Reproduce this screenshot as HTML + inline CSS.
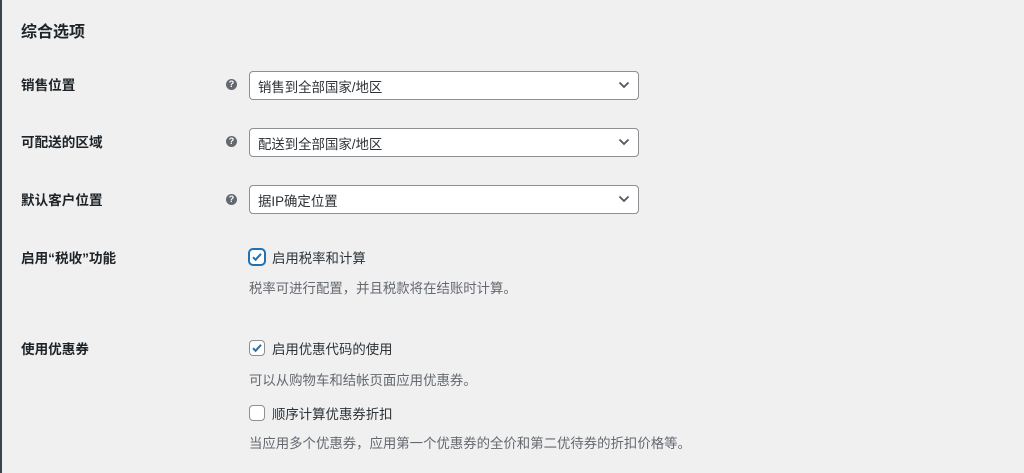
<!DOCTYPE html>
<html><head><meta charset="utf-8"><style>
body{margin:0;width:1024px;height:473px;background:#f0f0f1;position:relative;overflow:hidden;font-family:"Liberation Sans","Noto Sans CJK SC",sans-serif;color:#1d2327}
.edge{position:absolute;left:0;top:0;width:2px;height:473px;background:#3c434a}
.a{position:absolute;white-space:nowrap}
h2{position:absolute;left:21px;top:18px;margin:0;font-size:16px;font-weight:700;color:#1d2327}
.lbl{font-size:13.6px;font-weight:700;color:#1d2327}
.help{position:absolute;left:226px;width:11px;height:11px;border-radius:50%;background:#646970;color:#fff;font-size:9px;font-weight:700;text-align:center;line-height:11px}
.sel{position:absolute;left:249px;width:388px;height:27px;background:#fff;border:1px solid #8c8f94;border-radius:4px;box-sizing:content-box;font-size:13.4px;color:#2c3338}
.sel span{position:absolute;left:8px;top:4px}
.sel svg{position:absolute;right:8px;top:9px}
.cb{position:absolute;left:249px;width:14px;height:14px;border:1px solid #8c8f94;border-radius:4px;background:#fff}
.cb svg{position:absolute;left:0;top:0}
.t{font-size:13.4px;color:#2c3338}
.d{font-size:13.4px;color:#646970}
</style></head><body>
<div class="edge"></div>
<h2>综合选项</h2>
<div class="a lbl" style="left:21px;top:74px">销售位置</div>
<div class="help" style="top:79px">?</div>
<div class="sel" style="top:71px"><span>销售到全部国家/地区</span><svg width="12" height="8" viewBox="0 0 12 8"><path d="M1.5 1.5L6 6l4.5-4.5" fill="none" stroke="#50575e" stroke-width="1.8"/></svg></div>

<div class="a lbl" style="left:21px;top:131px">可配送的区域</div>
<div class="help" style="top:136px">?</div>
<div class="sel" style="top:128px"><span>配送到全部国家/地区</span><svg width="12" height="8" viewBox="0 0 12 8"><path d="M1.5 1.5L6 6l4.5-4.5" fill="none" stroke="#50575e" stroke-width="1.8"/></svg></div>

<div class="a lbl" style="left:21px;top:189px">默认客户位置</div>
<div class="help" style="top:194px">?</div>
<div class="sel" style="top:185px"><span>据IP确定位置</span><svg width="12" height="8" viewBox="0 0 12 8"><path d="M1.5 1.5L6 6l4.5-4.5" fill="none" stroke="#50575e" stroke-width="1.8"/></svg></div>

<div class="a lbl" style="left:21px;top:247px">启用“税收”功能</div>
<div class="cb" style="top:249px;border-color:#2271b1;box-shadow:0 0 0 1px #2271b1"><svg width="14" height="14" viewBox="0 0 14 14"><path d="M3 7.2l2.6 2.6L11 3.8" fill="none" stroke="#2271b1" stroke-width="2"/></svg></div>
<div class="a t" style="left:272px;top:247px">启用税率和计算</div>
<div class="a d" style="left:249px;top:277px">税率可进行配置，并且税款将在结账时计算。</div>

<div class="a lbl" style="left:21px;top:338px">使用优惠券</div>
<div class="cb" style="top:340px"><svg width="14" height="14" viewBox="0 0 14 14"><path d="M3 7.2l2.6 2.6L11 3.8" fill="none" stroke="#2271b1" stroke-width="2"/></svg></div>
<div class="a t" style="left:272px;top:338px">启用优惠代码的使用</div>
<div class="a d" style="left:249px;top:369px">可以从购物车和结帐页面应用优惠券。</div>
<div class="cb" style="top:405px"></div>
<div class="a t" style="left:272px;top:403px">顺序计算优惠券折扣</div>
<div class="a d" style="left:249px;top:432px">当应用多个优惠券，应用第一个优惠券的全价和第二优待券的折扣价格等。</div>
</body></html>
